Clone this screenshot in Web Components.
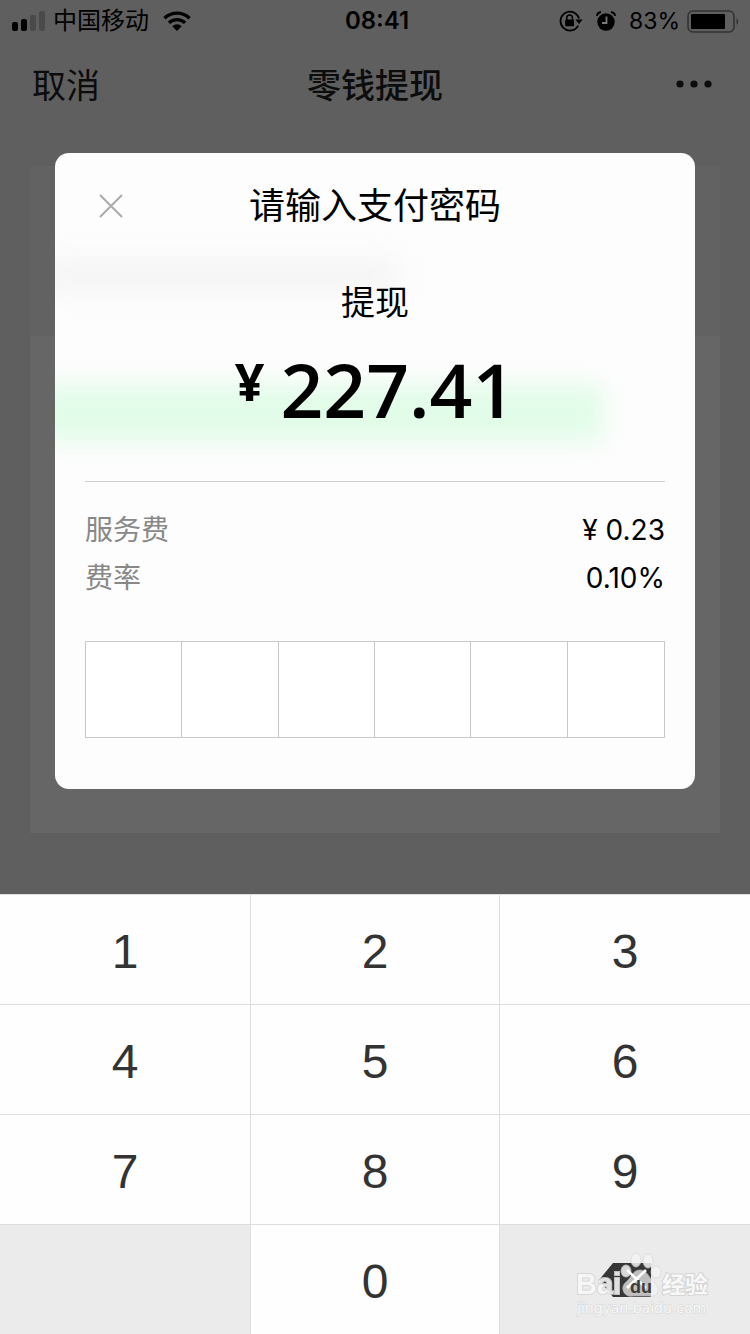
<!DOCTYPE html>
<html lang="zh-CN">
<head>
<meta charset="utf-8">
<meta name="viewport" content="width=device-width, initial-scale=1">
<title>零钱提现</title>
<style>
  html, body { margin: 0; }
  body {
    min-height: 100vh;
    display: flex;
    flex-direction: column;
    background: #5f5f5f;
    color: #000;
    font-family: Inter, "Noto Sans CJK SC", sans-serif;
  }
  withdraw-page { flex: 1; }
</style>
</head>
<body>
<withdraw-page></withdraw-page>

<template id="status-bar">
  <style>
    :host { display: grid; grid-template-columns: 1fr auto 1fr; align-items: center; height: 40px; padding: 0 8px 0 12px; font-size: 24px; line-height: 42px; }
    .side { display: flex; align-items: center; }
    .carrier { margin: 0 14px 0 8px; }
    .right { justify-content: flex-end; gap: 13px; margin-right: 2px; font-size: 23px; }
    .power { display: flex; align-items: center; gap: 7px; }
    time { font-weight: 600; }
    svg { display: block; }
  </style>
  <div class="side">
    <svg width="33" height="20" viewBox="0 0 33 20" aria-hidden="true">
      <rect x="0" y="11" width="6" height="9" rx="2"/><rect x="9" y="8" width="6" height="12" rx="2"/>
      <rect x="18" y="4" width="6" height="16" rx="2" fill="#4a4a4a"/><rect x="27" y="0" width="6" height="20" rx="2" fill="#4a4a4a"/>
    </svg>
    <span class="carrier">中国移动</span>
    <svg width="28" height="20" viewBox="0 0 28 20" aria-hidden="true">
      <path d="M1.5 7.2a18 18 0 0 1 25 0M6 11.9a11.5 11.5 0 0 1 16 0" fill="none" stroke="#000" stroke-width="3.4"/>
      <path d="M9.3 15.2a6.8 6.8 0 0 1 9.4 0L14 20z"/>
    </svg>
  </div>
  <time>08:41</time>
  <div class="side right">
    <svg width="24" height="22" viewBox="0 0 24 22" aria-hidden="true">
      <path d="M19.2 15.6A9.4 9.4 0 1 1 20 8.6" fill="none" stroke="#000" stroke-width="1.8"/>
      <path d="M16.4 9.4h7.2L20 14z"/>
      <rect x="6.2" y="9.4" width="8.8" height="6.8" rx="1"/>
      <path d="M7.8 10V7.800a2.800 2.800 0 0 1 5.600 0V10" fill="none" stroke="#000" stroke-width="1.5"/>
    </svg>
    <svg width="20" height="20" viewBox="0 0 20 20" aria-hidden="true">
      <circle cx="10" cy="11" r="8.7"/>
      <path d="M.8 4.800Q1.500 1.500 5 1M19.200 4.800Q18.500 1.500 15 1" fill="none" stroke="#000" stroke-width="1.8"/>
      <path d="M10.500 5.500V12H6" fill="none" stroke="#777" stroke-width="1.8"/>
    </svg>
    <span class="power">
      <span>83%</span>
      <svg width="53" height="23" viewBox="0 0 53 23" aria-hidden="true">
        <rect x="1" y="1" width="46" height="21" rx="5" fill="none" stroke="#333" stroke-width="1.6"/>
        <rect x="4" y="4" width="34" height="15" rx="1"/>
        <path d="M49.500 8q3.500 3.500 0 7z" fill="#333"/>
      </svg>
    </span>
  </div>
</template>

<template id="nav-bar">
  <style>
    :host { display: grid; grid-template-columns: 1fr auto 1fr; align-items: center; height: 88px; padding: 0 32px; color: #0c0c0c; font-size: 34px; line-height: 52px; }
    button { all: unset; cursor: pointer; }
    h1 { margin: 0; font-size: 34px; font-weight: 500; }
    .cancel, h1 { padding-top: 3px; }
    .more { justify-self: end; padding: 16px 4px; }
    svg { display: block; }
  </style>
  <button type="button" class="cancel"><slot name="cancel"></slot></button>
  <h1><slot></slot></h1>
  <button type="button" class="more" aria-label="更多">
    <svg width="38" height="8" viewBox="0 0 38 8" fill="#0c0c0c"><circle cx="4" cy="4" r="3.6"/><circle cx="18" cy="4" r="3.6"/><circle cx="32" cy="4" r="3.6"/></svg>
  </button>
</template>

<template id="fee-row">
  <style>
    :host { display: flex; justify-content: space-between; font-size: 28px; line-height: 48px; }
    .label { color: #888; }
  </style>
  <span class="label"><slot name="label"></slot></span>
  <span><slot></slot></span>
</template>

<template id="pin-field">
  <style>
    :host { display: grid; grid-template-columns: repeat(6, 1fr); border: 1px solid #c8c8c8; background: #fff; }
    input { box-sizing: border-box; width: 100%; min-width: 0; height: 95px; margin: 0; padding: 0; border: 0; border-right: 1px solid #c8c8c8; border-radius: 0; background: transparent; text-align: center; font-size: 48px; outline: 0; }
    input:last-child { border-right: 0; }
  </style>
</template>

<template id="pay-dialog">
  <style>
    :host { display: block; position: relative; overflow: hidden; box-sizing: border-box; padding: 24px 30px 51px; border-radius: 14px; background: #fdfdfd; }
    .haze { position: absolute; filter: blur(12px); }
    .grey { left: -10px; top: 104px; width: 352px; height: 36px; background: #f5f5f5; }
    .green { left: -20px; top: 232px; width: 568px; height: 56px; background: #e1fce8; }
    header, .sum, hr, fee-row, pin-field { position: relative; }
    header { display: grid; grid-template-columns: 52px 1fr 52px; align-items: center; }
    button { all: unset; cursor: pointer; justify-self: center; }
    svg { display: block; }
    h2 { margin: 0; text-align: center; font-size: 36px; font-weight: 400; line-height: 58px; }
    .sum { text-align: center; }
    .sum p { margin: 44px 0 0; font-size: 34px; line-height: 48px; }
    .amount { display: flex; justify-content: center; gap: 16px; margin-top: 8px; font-family: "Open Sans", sans-serif; font-weight: 600; font-size: 75px; line-height: 108px; }
    .amount span { font-size: 52px; line-height: 92px; font-weight: 700; }
    hr { margin: 38px 0 24px; border: 0; border-top: 1px solid #d0d0d0; }
    pin-field { margin-top: 39px; }
  </style>
  <div class="haze grey"></div>
  <div class="haze green"></div>
  <header>
    <button type="button" aria-label="关闭"><svg width="24" height="24" viewBox="0 0 24 24"><path d="M1 1l22 22M23 1L1 23" fill="none" stroke="#aaa" stroke-width="2"/></svg></button>
    <h2><slot name="title"></slot></h2>
  </header>
  <div class="sum">
    <p><slot name="kind"></slot></p>
    <div class="amount"><span>¥</span><slot name="amount"></slot></div>
  </div>
  <hr>
  <slot></slot>
  <pin-field></pin-field>
</template>

<template id="key-pad">
  <style>
    :host { display: grid; grid-template-columns: 126fr 125fr 126fr; gap: 1px; padding-top: 1px; background: #dedede; }
    button, .blank { box-sizing: border-box; height: 109px; margin: 0; padding: 4px 0 0; border: 0; background: #fefefe; color: #333; font: 48px/1 "Liberation Sans", sans-serif; }
    .blank, .delete { background: #ebebeb; }
    .delete { display: grid; place-items: center; padding: 0; }
  </style>
  <button>1</button><button>2</button><button>3</button>
  <button>4</button><button>5</button><button>6</button>
  <button>7</button><button>8</button><button>9</button>
  <div class="blank"></div><button>0</button>
  <button class="delete" aria-label="删除">
    <svg width="52" height="34" viewBox="0 0 52 34"><path d="M0 17L14 0H52V34H14z" fill="#363636"/></svg>
  </button>
</template>

<template id="site-mark">
  <style>
    :host { display: block; pointer-events: none; }
    svg { display: block; }
    text { fill: #f8f8f8; stroke: #d4d4d4; stroke-width: 2px; paint-order: stroke; }
    .url { stroke-width: 1px; }
    .du { fill: #3c3c3c; stroke: none; }
  </style>
  <svg width="140" height="68" viewBox="0 0 140 68">
    <g fill="#f4f4f4" stroke="#d6d6d6" stroke-width=".8">
      <g opacity=".85">
        <ellipse cx="62" cy="10" rx="5" ry="7"/><ellipse cx="74" cy="11" rx="5" ry="7"/>
        <ellipse cx="52" cy="21" rx="5" ry="6"/><ellipse cx="82" cy="22" rx="5" ry="6"/>
      </g>
      <path opacity=".72" d="M66 20c-6 0-8 5-11 9-4 4-7 6-6 11 1 5 6 7 10 6h16c5 1 9-1 9-6 0-6-4-7-7-11-3-4-5-9-11-9z"/>
    </g>
    <path d="M53 20l19 18M72 20L53 38" fill="none" stroke="#fff" stroke-width="2.500"/>
    <g font-family="'Liberation Sans', sans-serif" font-weight="700">
      <text x="2" y="44" font-size="29" opacity=".88">Bai</text>
      <text class="du" x="56" y="43" font-size="18">du</text>
    </g>
    <text x="88" y="43" font-family="'Noto Sans CJK SC', sans-serif" font-weight="700" font-size="23">经验</text>
    <text class="url" x="3" y="63" font-family="'DejaVu Sans', sans-serif" font-size="14">jingyan.baidu.com</text>
  </svg>
</template>

<template id="withdraw-page">
  <style>
    :host { display: flex; flex-direction: column; position: relative; }
    main { flex: 1; display: grid; }
    .sheet, pay-dialog { grid-area: 1 / 1; }
    .sheet { margin: 38px 30px 61px; background: linear-gradient(#626262 170px, #666 170px); }
    pay-dialog { margin: 25px 55px 105px; align-self: start; }
    site-mark { position: absolute; right: 36px; bottom: 16px; }
  </style>
  <status-bar></status-bar>
  <nav-bar><span slot="cancel">取消</span>零钱提现</nav-bar>
  <main>
    <div class="sheet"></div>
    <pay-dialog role="dialog" aria-label="请输入支付密码">
      <span slot="title">请输入支付密码</span>
      <span slot="kind">提现</span>
      <span slot="amount">227.41</span>
      <fee-row><span slot="label">服务费</span>¥ 0.23</fee-row>
      <fee-row><span slot="label">费率</span>0.10%</fee-row>
    </pay-dialog>
  </main>
  <key-pad></key-pad>
  <site-mark></site-mark>
</template>

<script>
  class TemplateElement extends HTMLElement {
    constructor() {
      super();
      const template = document.getElementById(this.localName);
      this.attachShadow({ mode: 'open' }).append(template.content.cloneNode(true));
    }
  }

  class PinField extends TemplateElement {
    constructor() {
      super();
      for (let i = 1; i <= 6; i++) {
        const input = document.createElement('input');
        input.type = 'password';
        input.inputMode = 'numeric';
        input.maxLength = 1;
        input.setAttribute('aria-label', '支付密码第' + i + '位');
        this.shadowRoot.append(input);
      }
    }
    get cells() { return [...this.shadowRoot.querySelectorAll('input')]; }
    push(digit) {
      const cell = this.cells.find(c => !c.value);
      if (cell) cell.value = digit;
    }
    pop() {
      const cell = this.cells.reverse().find(c => c.value);
      if (cell) cell.value = '';
    }
  }

  class KeyPad extends TemplateElement {
    constructor() {
      super();
      this.shadowRoot.addEventListener('click', event => {
        const key = event.target.closest('button');
        if (key) this.dispatchEvent(new CustomEvent('key', { detail: key.textContent.trim() }));
      });
    }
  }

  class WithdrawPage extends TemplateElement {
    connectedCallback() {
      this.shadowRoot.querySelector('key-pad').addEventListener('key', event => {
        const pin = this.shadowRoot.querySelector('pay-dialog').shadowRoot.querySelector('pin-field');
        event.detail ? pin.push(event.detail) : pin.pop();
      });
    }
  }

  for (const name of ['status-bar', 'nav-bar', 'fee-row', 'pay-dialog', 'site-mark']) {
    customElements.define(name, class extends TemplateElement {});
  }
  customElements.define('pin-field', PinField);
  customElements.define('key-pad', KeyPad);
  customElements.define('withdraw-page', WithdrawPage);
</script>
</body>
</html>
